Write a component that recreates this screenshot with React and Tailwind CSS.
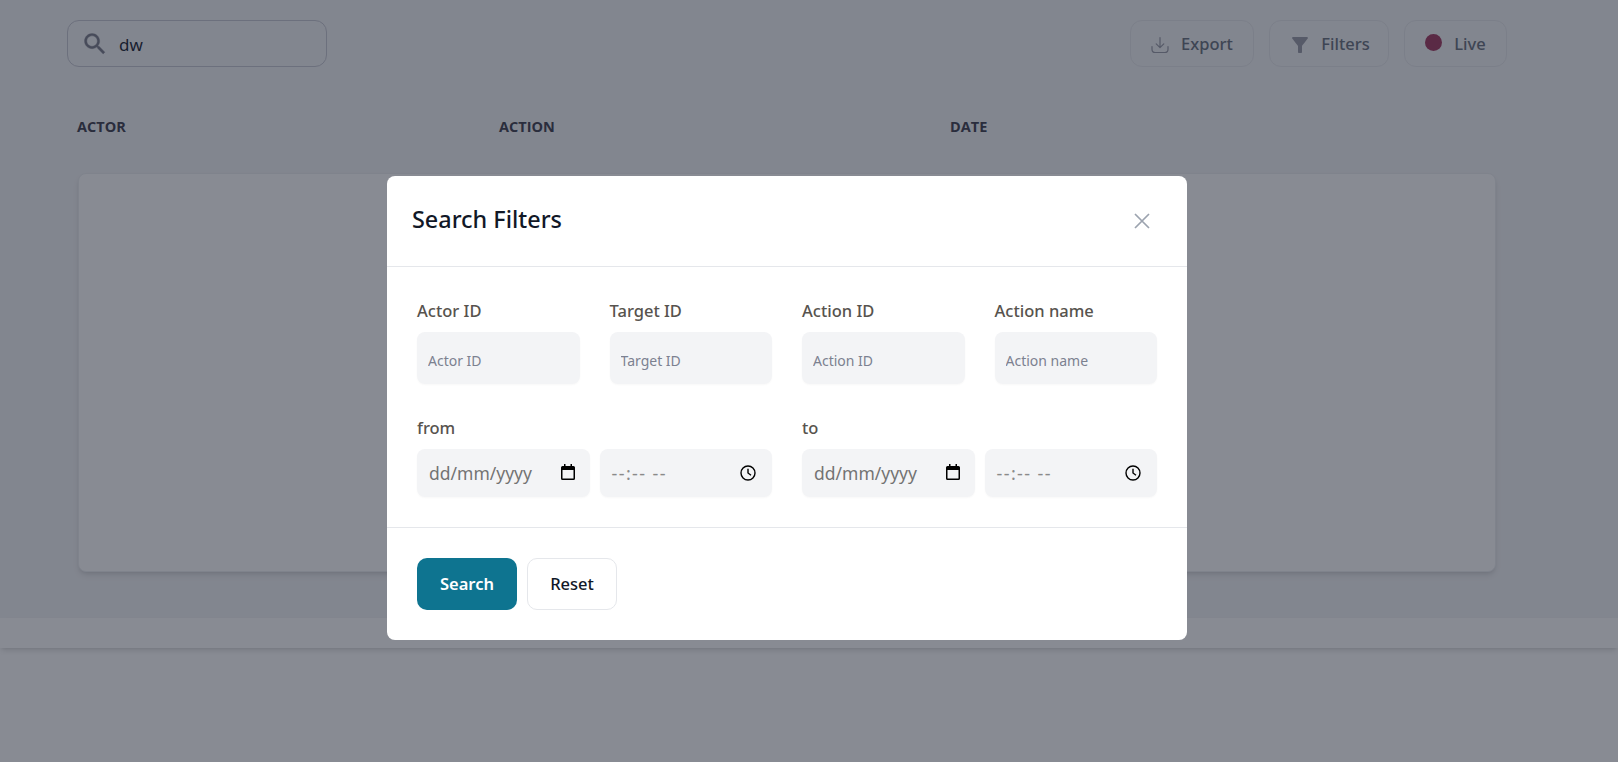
const font = { fontFamily: '"Noto Sans", "Open Sans", sans-serif' };

function SearchIcon() {
  return (
    <svg width="28" height="28" viewBox="0 0 24 24" fill="#7d7f8d" stroke="#7d7f8d" strokeWidth="0.3">
      <path d="M15.5 14h-.79l-.28-.27C15.41 12.59 16 11.11 16 9.5 16 5.91 13.09 3 9.5 3S3 5.91 3 9.5 5.91 16 9.5 16c1.61 0 3.09-.59 4.23-1.57l.27.28v.79l5 4.99L20.49 19l-4.99-5zm-6 0C7.01 14 5 11.99 5 9.5S7.01 5 9.5 5 14 7.01 14 9.5 11.99 14 9.5 14z" />
    </svg>
  );
}

function ExportIcon() {
  return (
    <svg width="18" height="18" viewBox="0 0 18 18" fill="none" stroke="#9a9ca8" strokeWidth="1.2" strokeLinecap="round" strokeLinejoin="round">
      <path d="M9 1.5v10M5.2 7.8 9 11.6l3.8-3.8" />
      <path d="M1 10.5v2.7c0 1.9 1.4 3.3 3.3 3.3h9.4c1.9 0 3.3-1.4 3.3-3.3v-2.7" />
    </svg>
  );
}

function FilterIcon() {
  return (
    <svg width="24" height="24" viewBox="0 0 24 24" fill="#9a9ca8">
      <path d="M4.25 5.61C6.27 8.2 10 13 10 13v6c0 .55.45 1 1 1h2c.55 0 1-.45 1-1v-6s3.72-4.8 5.74-7.39c.51-.66.04-1.61-.79-1.61H5.04c-.83 0-1.3.95-.79 1.61z" />
    </svg>
  );
}

function CalendarIcon() {
  return (
    <svg width="14" height="16" viewBox="0 0 14 16" className="mb-[2px] shrink-0">
      <path d="M3 0h1.5v2h5V0H11v2h1.5A1.5 1.5 0 0 1 14 3.5v11a1.5 1.5 0 0 1-1.5 1.5h-11A1.5 1.5 0 0 1 0 14.5v-11A1.5 1.5 0 0 1 1.5 2H3V0zM1.5 6v8.5h11V6h-11z" fill="#000" fillRule="evenodd" />
    </svg>
  );
}

function ClockIcon() {
  return (
    <svg width="16" height="16" viewBox="0 0 16 16" fill="none" stroke="#000" strokeWidth="1.4" className="mb-[1px] shrink-0">
      <circle cx="8" cy="8" r="7" />
      <path d="M8 3.8V8l3 2.2" />
    </svg>
  );
}

function Field({ label }) {
  return (
    <div className="flex flex-col">
      <label className="mb-[9px] text-[16.5px] leading-[24px] font-medium text-[#57534e]">{label}</label>
      <input
        placeholder={label}
        className="h-[52px] w-full rounded-lg bg-[#f3f4f6] px-[11px] pt-[5px] text-sm shadow-[0_1px_2px_rgba(0,0,0,0.03)] outline-none placeholder:text-[#7c8190]"
      />
    </div>
  );
}

function DateRange({ label }) {
  return (
    <div className="flex flex-col">
      <label className="mb-[9px] text-[16.5px] leading-[24px] font-medium text-[#57534e]">{label}</label>
      <div className="grid grid-cols-2 gap-[10px]">
        <div className="flex h-[48px] items-center rounded-lg bg-[#f3f4f6] pl-[12px] pr-[15px] shadow-[0_1px_2px_rgba(0,0,0,0.03)]">
          <span className="flex-1 text-[17.5px] text-[#737373]">dd/mm/yyyy</span>
          <CalendarIcon />
        </div>
        <div className="flex h-[48px] items-center rounded-lg bg-[#f3f4f6] pl-[12px] pr-[16px] shadow-[0_1px_2px_rgba(0,0,0,0.03)]">
          <span className="flex-1 whitespace-pre text-[18px] tracking-[1.4px] text-[#8a8a8a]">--:-- --</span>
          <ClockIcon />
        </div>
      </div>
    </div>
  );
}

export default function App() {
  return (
    <div className="relative h-[762px] overflow-hidden bg-white" style={font}>
      <div className="h-[618px] bg-[#f3f4f6] pt-5">
        <div className="flex items-start justify-between pl-[67px] pr-[111px]">
          <div className="flex h-[47px] w-[260px] items-center gap-[10px] rounded-xl border border-[#c6c8d2] pl-[13px]">
            <SearchIcon />
            <span className="pt-[2px] text-[17px] text-[#1f2937]">dw</span>
          </div>
          <div className="flex gap-[15px] text-[16.5px] font-medium text-[#6b7280]">
            <button className="flex h-[47px] w-[124px] items-center justify-center gap-3 rounded-xl border border-[#e5e7eb] pt-[2px]">
              <ExportIcon />
              Export
            </button>
            <button className="flex h-[47px] w-[120px] items-center justify-center gap-[9px] rounded-xl border border-[#e5e7eb] pt-[2px]">
              <FilterIcon />
              Filters
            </button>
            <button className="flex h-[47px] w-[103px] items-center justify-center gap-3 rounded-xl border border-[#e5e7eb] pt-[2px]">
              <span className="mb-[4px] h-[17px] w-[17px] rounded-full bg-[#a33c62]" />
              Live
            </button>
          </div>
        </div>

        <div className="mt-[50px] grid grid-cols-[422px_451px_1fr] pl-[77px] text-[14.5px] leading-[20px] font-bold uppercase text-[#434352]" style={{ fontFamily: '"Open Sans", sans-serif' }}>
          <span>Actor</span>
          <span>Action</span>
          <span>Date</span>
        </div>

        <div className="ml-[78px] mt-[36px] h-[399px] w-[1418px] rounded-lg border border-[#eceef1] bg-white shadow-md" />
      </div>
      <div className="h-[30px] bg-white shadow-md" />

      <div className="absolute inset-0 bg-[#111827]/50" />

      <div className="absolute left-[387px] top-[176px] w-[800px] rounded-lg bg-white">
        <div className="flex h-[91px] items-center justify-between border-b border-[#e5e7eb] pl-[25px] pr-[37px]">
          <h2 className="mb-[3px] text-[23.4px] font-medium text-[#111827]">Search Filters</h2>
          <svg width="16" height="16" viewBox="0 0 16 16" fill="none" stroke="#9ca3af" strokeWidth="1.7">
            <path d="M1 1l14 14M15 1 1 15" />
          </svg>
        </div>
        <div className="border-b border-[#e5e7eb] px-[30px] pb-[30px] pt-[32px]">
          <div className="grid grid-cols-4 gap-[30px]">
            <Field label="Actor ID" />
            <Field label="Target ID" />
            <Field label="Action ID" />
            <Field label="Action name" />
          </div>
          <div className="mt-[32px] grid grid-cols-2 gap-[30px]">
            <DateRange label="from" />
            <DateRange label="to" />
          </div>
        </div>
        <div className="flex gap-[10px] p-[30px]">
          <button className="h-[52px] w-[100px] rounded-[10px] bg-[#0e7490] text-[16.5px] font-semibold text-white">Search</button>
          <button className="h-[52px] w-[90px] rounded-[10px] border border-[#e5e7eb] text-[16.5px] font-medium text-[#111827]">Reset</button>
        </div>
      </div>
    </div>
  );
}
